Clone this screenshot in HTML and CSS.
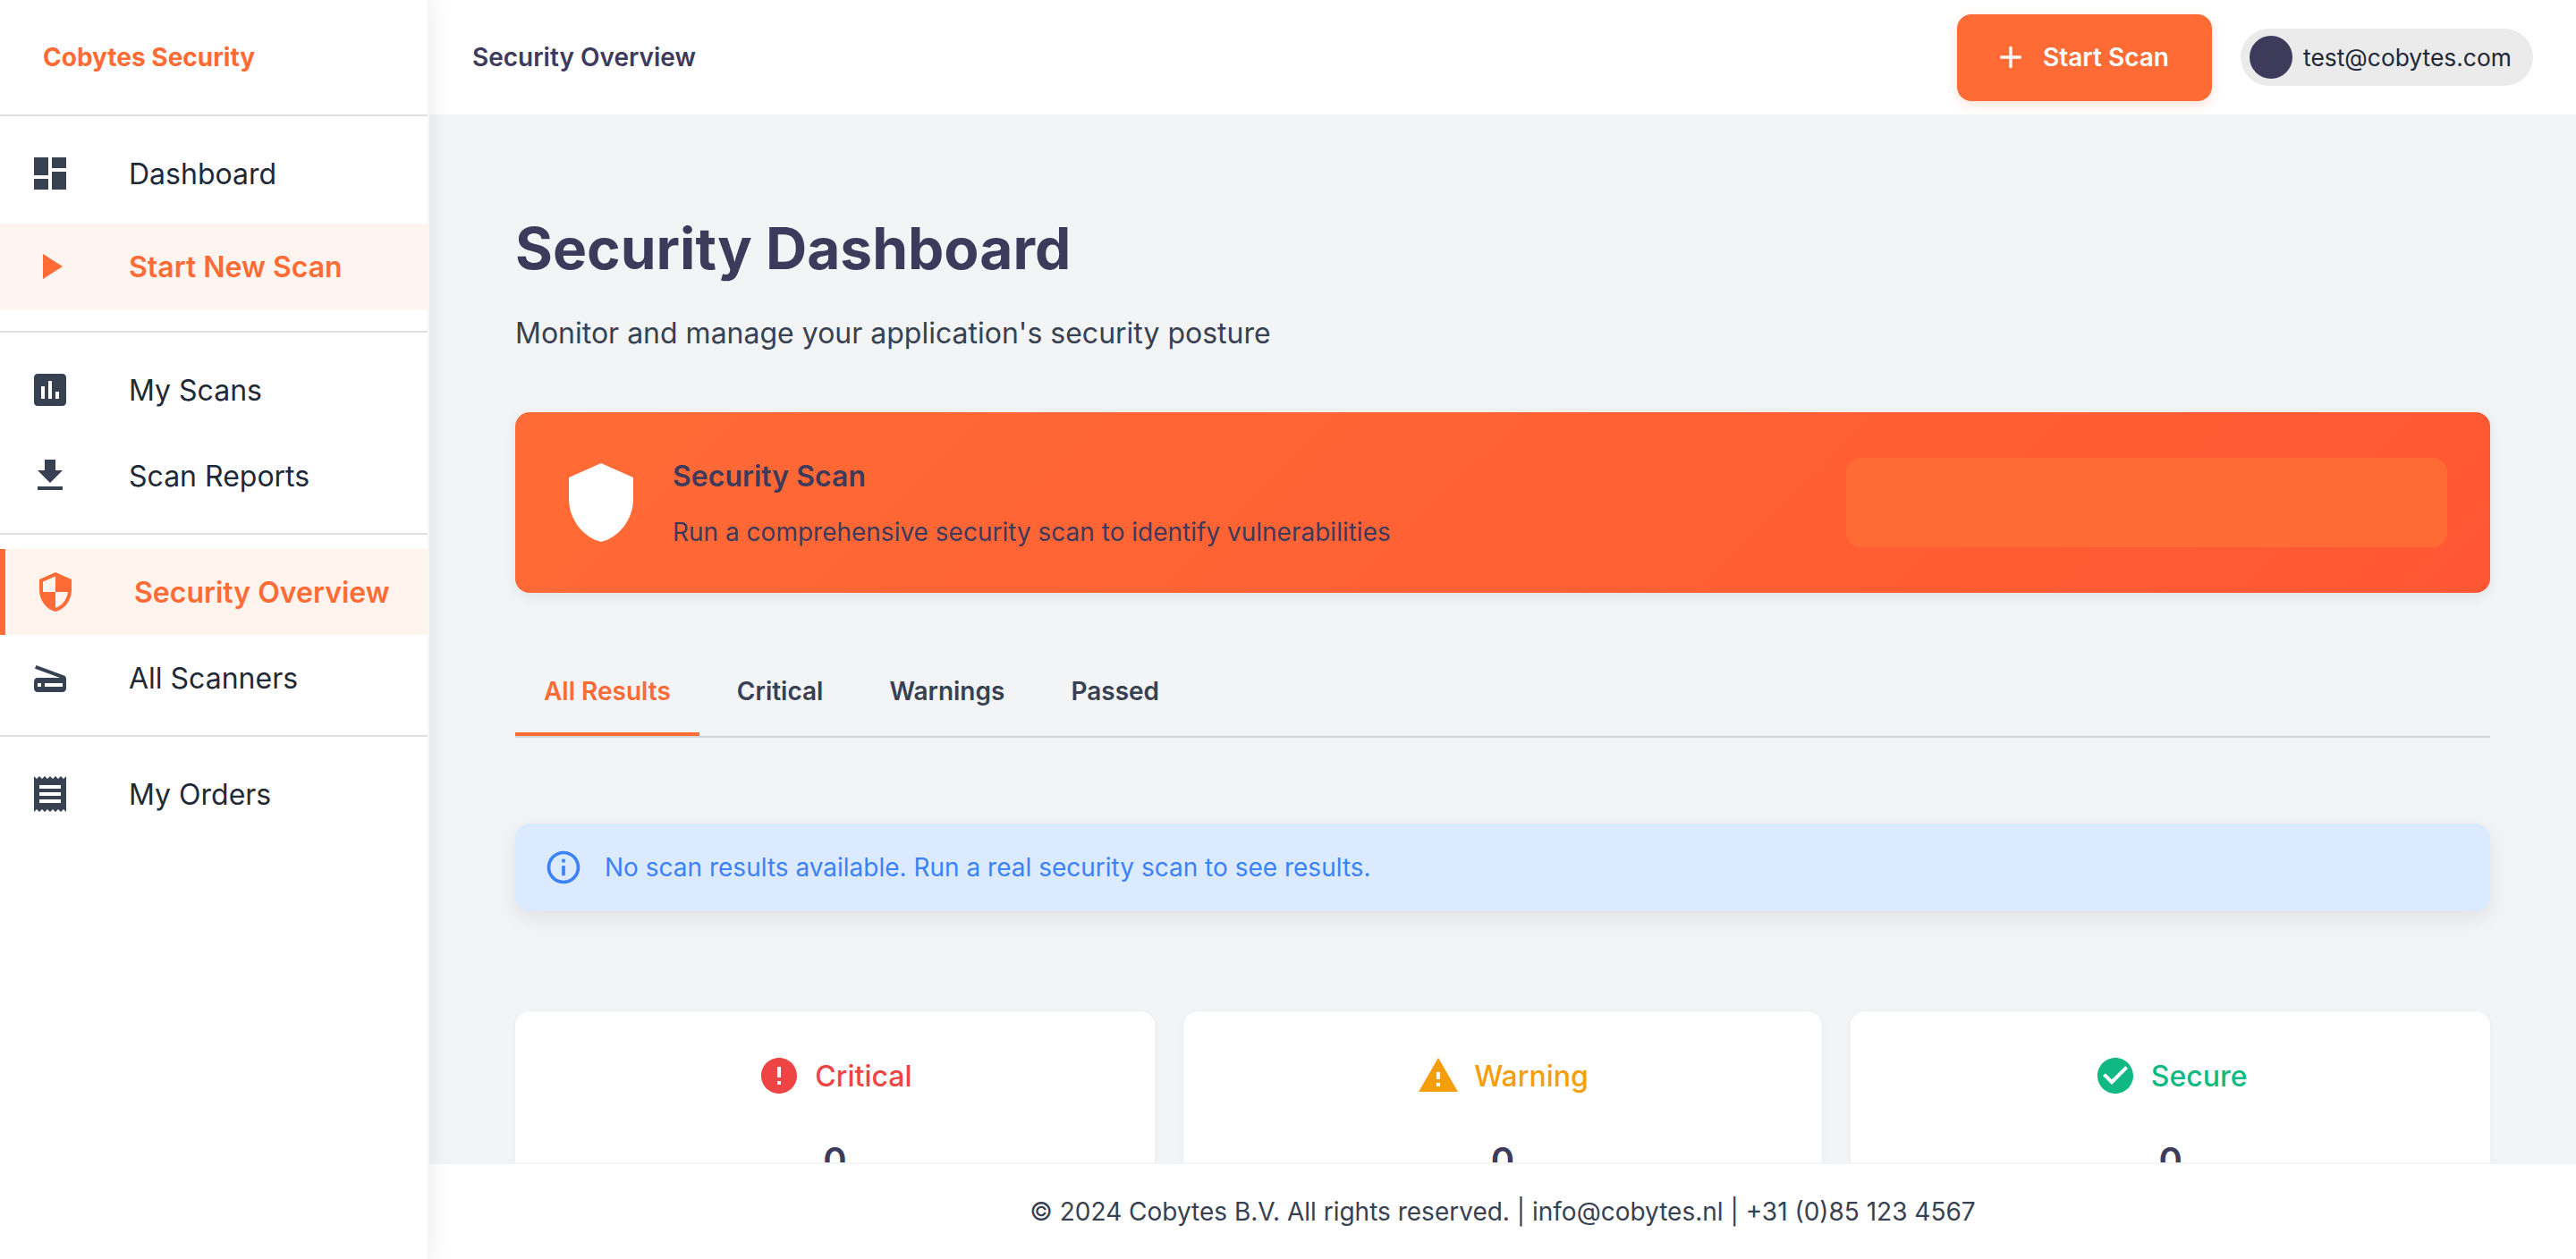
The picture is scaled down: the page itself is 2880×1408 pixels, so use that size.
FILE: index.html

```html
<!DOCTYPE html>
<html lang="en">
<head>
  <meta charset="UTF-8" />
  <title>Cobytes Security</title>
  <link rel="stylesheet" href="styles.css">
</head>
<body>
  <div class="app">
    <aside class="sidebar">
      <div class="brand">Cobytes Security</div>
      <nav class="nav-group">
        <a class="nav-item">
          <svg class="nav-icon" viewBox="0 0 24 24"><path d="M3 13h8V3H3v10zm0 8h8v-6H3v6zm10 0h8V11h-8v10zm0-18v6h8V3h-8z"/></svg>
          <span>Dashboard</span>
        </a>
        <a class="nav-item nav-item-cta">
          <svg class="nav-icon" viewBox="0 0 24 24"><path d="M8 5v14l11-7z"/></svg>
          <span>Start New Scan</span>
        </a>
      </nav>
      <nav class="nav-group">
        <a class="nav-item">
          <svg class="nav-icon" viewBox="0 0 24 24"><path d="M19 3H5c-1.100 0-2 .9-2 2v14c0 1.100.9 2 2 2h14c1.100 0 2-.9 2-2V5c0-1.100-.9-2-2-2zM9 17H7v-7h2v7zm4 0h-2V7h2v10zm4 0h-2v-4h2v4z"/></svg>
          <span>My Scans</span>
        </a>
        <a class="nav-item">
          <svg class="nav-icon" viewBox="0 0 24 24"><path d="M19 9h-4V3H9v6H5l7 7 7-7zM5 18v2h14v-2H5z"/></svg>
          <span>Scan Reports</span>
        </a>
      </nav>
      <nav class="nav-group">
        <a class="nav-item nav-item-active">
          <svg class="nav-icon" viewBox="0 0 24 24"><path d="M12 1 3 5v6c0 5.550 3.840 10.740 9 12 5.160-1.260 9-6.450 9-12V5l-9-4zm0 10.990h7c-.53 4.120-3.280 7.790-7 8.940V12H5V6.300l7-3.110v8.800z"/></svg>
          <span>Security Overview</span>
        </a>
        <a class="nav-item">
          <svg class="nav-icon" viewBox="0 0 24 24"><path d="M19.800 10.700 4.200 5l-.7 1.900L17.600 12H5c-1.100 0-2 .9-2 2v4c0 1.100.9 2 2 2h14c1.100 0 2-.9 2-2v-5.500c0-.8-.5-1.600-1.200-1.800zM7 17H5v-2h2v2zm12 0H9v-2h10v2z"/></svg>
          <span>All Scanners</span>
        </a>
      </nav>
      <nav class="nav-group nav-group-last">
        <a class="nav-item">
          <svg class="nav-icon" viewBox="0 0 24 24"><path d="M18 17H6v-2h12v2zm0-4H6v-2h12v2zm0-4H6V7h12v2zM3 22l1.500-1.500L6 22l1.500-1.500L9 22l1.500-1.500L12 22l1.500-1.500L15 22l1.500-1.500L18 22l1.500-1.500L21 22V2l-1.500 1.500L18 2l-1.500 1.500L15 2l-1.500 1.500L12 2l-1.500 1.500L9 2 7.500 3.500 6 2 4.500 3.500 3 2v20z"/></svg>
          <span>My Orders</span>
        </a>
      </nav>
    </aside>

    <div class="content">
      <header class="topbar">
        <div class="topbar-title">Security Overview</div>
        <div class="topbar-actions">
          <button class="scan-btn">
            <svg class="scan-btn-icon" viewBox="0 0 24 24"><path d="M19 13h-6v6h-2v-6H5v-2h6V5h2v6h6v2z"/></svg>
            Start Scan
          </button>
          <div class="user-chip">
            <div class="avatar">T</div>
            <span>test@cobytes.com</span>
          </div>
        </div>
      </header>

      <main class="main">
        <h1 class="page-title">Security Dashboard</h1>
        <p class="page-sub">Monitor and manage your application's security posture</p>

        <section class="banner">
          <div class="banner-info">
            <svg class="banner-icon" viewBox="0 0 24 24"><path d="M12 1 3 5v6c0 5.550 3.840 10.740 9 12 5.160-1.260 9-6.450 9-12V5l-9-4z"/></svg>
            <div>
              <h2 class="banner-title">Security Scan</h2>
              <p class="banner-text">Run a comprehensive security scan to identify vulnerabilities</p>
            </div>
          </div>
          <div class="banner-slot"></div>
        </section>

        <div class="tabs">
          <div class="tab tab-active">All Results</div>
          <div class="tab">Critical</div>
          <div class="tab">Warnings</div>
          <div class="tab">Passed</div>
        </div>

        <div class="alert">
          <svg class="alert-icon" viewBox="0 0 24 24"><path d="M11 7h2v2h-2zm0 4h2v6h-2zm1-9C6.480 2 2 6.480 2 12s4.480 10 10 10 10-4.480 10-10S17.520 2 12 2zm0 18c-4.410 0-8-3.590-8-8s3.590-8 8-8 8 3.590 8 8-3.590 8-8 8z"/></svg>
          <span>No scan results available. Run a real security scan to see results.</span>
        </div>

        <div class="cards">
          <div class="card card-critical">
            <div class="card-head">
              <svg class="card-icon" viewBox="0 0 24 24"><path d="M12 2C6.480 2 2 6.480 2 12s4.480 10 10 10 10-4.480 10-10S17.520 2 12 2zm1 15h-2v-2h2v2zm0-4h-2V7h2v6z"/></svg>
              <span>Critical</span>
            </div>
            <div class="card-count">0</div>
          </div>
          <div class="card card-warning">
            <div class="card-head">
              <svg class="card-icon" viewBox="0 0 24 24"><path d="M1 21h22L12 2 1 21zm12-3h-2v-2h2v2zm0-4h-2v-4h2v4z"/></svg>
              <span>Warning</span>
            </div>
            <div class="card-count">0</div>
          </div>
          <div class="card card-secure">
            <div class="card-head">
              <svg class="card-icon" viewBox="0 0 24 24"><path d="M12 2C6.480 2 2 6.480 2 12s4.480 10 10 10 10-4.480 10-10S17.520 2 12 2zm-2 15-5-5 1.410-1.410L10 14.170l7.590-7.590L19 8l-9 9z"/></svg>
              <span>Secure</span>
            </div>
            <div class="card-count">0</div>
          </div>
        </div>
      </main>

      <footer class="footer">© 2024 Cobytes B.V. All rights reserved. | info@cobytes.nl | +31 (0)85 123 4567</footer>
    </div>
  </div>
</body>
</html>
```

FILE: styles.css

```css
html, body {
  margin: 0;
  padding: 0;
  height: 100%;
  overflow: hidden;
  background-color: #f3f4f6;
  color: #1f2937;
  font-family: Inter, "Noto Sans", sans-serif;
  font-size: 32px;
}

.app {
  display: flex;
  height: 100%;
}

/* sidebar */
.sidebar {
  width: 480px;
  box-sizing: border-box;
  flex-shrink: 0;
  background: white;
  border-right: 2px solid #f6f6f6;
  box-shadow: 2px 0 24px rgba(0, 0, 0, 0.07);
  z-index: 2;
}

.brand {
  height: 130px;
  box-sizing: border-box;
  border-bottom: 2px solid #e0e0e0;
  display: flex;
  align-items: center;
  padding-left: 48px;
  color: #ff6b35;
  font-size: 28px;
  font-weight: 700;
}

.nav-group {
  padding: 16px 0;
  border-bottom: 2px solid #e0e0e0;
}

.nav-group-last {
  border-bottom: none;
}

.nav-item {
  display: flex;
  align-items: center;
  height: 96px;
  padding-left: 32px;
  color: #1f2937;
}

.nav-icon {
  width: 48px;
  height: 48px;
  margin-right: 64px;
  fill: #374151;
  flex-shrink: 0;
}

.nav-item-cta {
  margin: 8px 0;
  background: #fff5f0;
  color: #ff6b35;
  font-weight: 600;
}

.nav-item-cta .nav-icon, .nav-item-active .nav-icon {
  fill: #ff6b35;
}

.nav-item-active {
  border-left: 6px solid #ff6b35;
  background: #fff3ee;
  color: #ff6b35;
  font-weight: 600;
}

/* top bar */
.content {
  flex: 1;
  min-width: 0;
  display: flex;
  flex-direction: column;
}

.topbar {
  height: 128px;
  flex-shrink: 0;
  box-sizing: border-box;
  background: white;
  display: flex;
  align-items: center;
  justify-content: space-between;
  padding: 0 48px;
}

.topbar-title {
  color: #3d3a5c;
  font-size: 28px;
  font-weight: 600;
}

.topbar-actions {
  display: flex;
  align-items: center;
  gap: 32px;
}

.scan-btn {
  display: flex;
  align-items: center;
  gap: 16px;
  height: 97px;
  width: 285px;
  padding: 0 8px 0 0;
  justify-content: center;
  border: none;
  border-radius: 16px;
  background: #ff6b35;
  color: white;
  font-family: inherit;
  font-size: 28px;
  font-weight: 600;
  box-shadow: 0 4px 12px rgba(255, 107, 53, 0.2);
}

.scan-btn-icon {
  width: 40px;
  height: 40px;
  fill: white;
}

.user-chip {
  display: flex;
  align-items: center;
  gap: 12px;
  height: 64px;
  width: 327px;
  box-sizing: border-box;
  padding-left: 10px;
  border-radius: 32px;
  background: #ebebeb;
  font-size: 26.4px;
}

.avatar {
  width: 48px;
  height: 48px;
  border-radius: 50%;
  background: #3d3a5c;
  color: #374151;
  font-size: 24px;
  display: flex;
  align-items: center;
  justify-content: center;
}

/* main */
.main {
  flex: 1;
  min-height: 0;
  overflow: hidden;
  padding: 111px 96px 0;
}

.page-title {
  margin: 0;
  color: #3d3a5c;
  font-size: 64px;
  line-height: 77px;
  font-weight: 700;
}

.page-sub {
  margin: 33px 0 0;
  color: #374151;
  font-size: 32px;
  line-height: 48px;
}

.banner {
  margin-top: 64px;
  height: 202px;
  box-sizing: border-box;
  padding: 0 48px;
  display: flex;
  align-items: center;
  justify-content: space-between;
  border-radius: 16px;
  background: linear-gradient(135deg, #ff6b35, #ff5733);
  box-shadow: 0 4px 16px rgba(0, 0, 0, 0.08);
}

.banner-info {
  display: flex;
  align-items: center;
  gap: 32px;
}

.banner-icon {
  width: 96px;
  height: 96px;
  fill: white;
}

.banner-title {
  margin: 0 0 17px;
  color: #3d3a5c;
  font-size: 32px;
  font-weight: 600;
  line-height: 48px;
}

.banner-text {
  margin: 0;
  color: #3d3a5c;
  font-size: 28px;
  line-height: 42px;
}

.banner-slot {
  width: 672px;
  height: 100px;
  border-radius: 16px;
  background: #ff6b35;
}

.tabs {
  margin-top: 64px;
  display: flex;
  gap: 10px;
  border-bottom: 2px solid #d1d5db;
}

.tab {
  height: 96px;
  box-sizing: border-box;
  padding: 0 32px;
  display: flex;
  align-items: center;
  color: #374151;
  font-size: 28px;
  font-weight: 600;
  border-bottom: 4px solid transparent;
}

.tab-active {
  color: #ff6b35;
  border-bottom-color: #ff6b35;
}

.alert {
  margin-top: 96px;
  height: 98px;
  box-sizing: border-box;
  padding: 0 32px;
  display: flex;
  align-items: center;
  gap: 24px;
  border-radius: 16px;
  background: #dbeafe;
  color: #3b82f6;
  font-size: 28px;
  box-shadow: 0 8px 24px rgba(0, 0, 0, 0.08);
}

.alert-icon {
  width: 44px;
  height: 44px;
  fill: #3b82f6;
}

.cards {
  margin-top: 112px;
  display: grid;
  grid-template-columns: repeat(3, 1fr);
  gap: 32px;
}

.card {
  padding: 48px 32px;
  border-radius: 16px;
  background: white;
  box-shadow: 0 2px 8px rgba(0, 0, 0, 0.04);
  text-align: center;
}

.card-head {
  display: flex;
  align-items: center;
  justify-content: center;
  gap: 16px;
  font-weight: 500;
}

.card-icon {
  width: 48px;
  height: 48px;
}

.card-critical { color: #ef4444; }
.card-warning { color: #f59e0b; }
.card-secure { color: #10b981; }

.card-critical .card-icon { fill: #ef4444; }
.card-warning .card-icon { fill: #f59e0b; }
.card-secure .card-icon { fill: #10b981; }

.card-count {
  margin-top: 46px;
  color: #3d3a5c;
  font-size: 40px;
  font-weight: 600;
}

/* footer */
.footer {
  height: 108px;
  flex-shrink: 0;
  box-sizing: border-box;
  border-top: 2px solid #f3f4f6;
  background: white;
  display: flex;
  align-items: center;
  justify-content: center;
  color: #374151;
  font-size: 28px;
}
```
